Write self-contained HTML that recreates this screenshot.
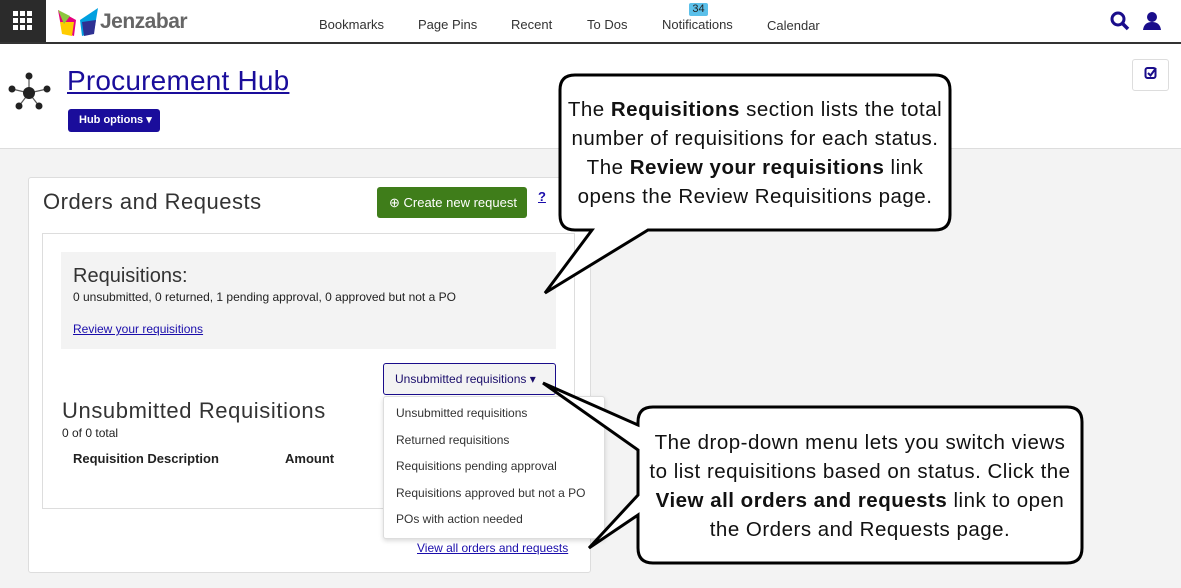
<!DOCTYPE html>
<html><head><style>
*{margin:0;padding:0;box-sizing:border-box}
body{width:1181px;height:588px;overflow:hidden;position:relative;background:#f3f3f3;font-family:"Liberation Sans",sans-serif;color:#222}
.a{position:absolute}
.nav{font-size:13px;color:#333}
u{color:#1a0dab}
.call{font-family:"Liberation Sans",sans-serif;font-size:20.5px;color:#111;text-align:center;line-height:29px;letter-spacing:0.5px;white-space:nowrap}
</style></head><body>
<div class="a" style="left:0;top:0;width:1181px;height:148px;background:#fff"></div>
<div class="a" style="left:0;top:0;width:46px;height:44px;background:#2b2b2b"></div>
<div class="a" style="left:46px;top:0;width:1135px;height:42px;background:#fff;border-top-left-radius:12px"></div>
<div class="a" style="left:0;top:42px;width:1181px;height:2px;background:#333"></div>
<svg class="a" style="left:13px;top:11px" width="20" height="20"><g fill="#fff"><rect x="0" y="0" width="5" height="5"/><rect x="7" y="0" width="5" height="5"/><rect x="14" y="0" width="5" height="5"/><rect x="0" y="7" width="5" height="5"/><rect x="7" y="7" width="5" height="5"/><rect x="14" y="7" width="5" height="5"/><rect x="0" y="14" width="5" height="5"/><rect x="7" y="14" width="5" height="5"/><rect x="14" y="14" width="5" height="5"/></g></svg>
<svg class="a" style="left:56px;top:6px" width="44" height="32"><path d="M2 4 L20 14 L18 30 L6 26Z" fill="#e6007e"/><path d="M4 16 L18 16 L16 30 L6 28Z" fill="#ffcc00"/><path d="M42 2 L24 14 L26 30 L38 26Z" fill="#00a0e0"/><path d="M40 14 L26 16 L28 30 L38 28Z" fill="#2e3192"/><path d="M2 4 L14 10 L8 18Z" fill="#8dc63f"/></svg>
<div class="a" style="left:100px;top:10px;font-size:21px;color:#666;font-weight:bold;letter-spacing:-0.5px">Jenzabar</div>
<div class="a nav" style="left:319px;top:17px">Bookmarks</div>
<div class="a nav" style="left:418px;top:17px">Page Pins</div>
<div class="a nav" style="left:511px;top:17px">Recent</div>
<div class="a nav" style="left:587px;top:17px">To Dos</div>
<div class="a" style="left:689px;top:3px;width:19px;height:13px;background:#5bc0ea;border-radius:2px;font-size:11px;text-align:center;line-height:13px;color:#222">34</div>
<div class="a nav" style="left:662px;top:17px">Notifications</div>
<div class="a nav" style="left:767px;top:18px">Calendar</div>
<svg class="a" style="left:1110px;top:11px" width="20" height="20"><circle cx="8" cy="8" r="6" fill="none" stroke="#1a0d8b" stroke-width="3"/><path d="M12 12 L18 18" stroke="#1a0d8b" stroke-width="3.5"/></svg>
<svg class="a" style="left:1142px;top:11px" width="20" height="20"><circle cx="10" cy="6" r="5" fill="#1a0d8b"/><path d="M1 19 Q2 11 10 11 Q18 11 19 19Z" fill="#1a0d8b"/></svg>
<div class="a" style="left:1132px;top:59px;width:37px;height:32px;border:1px solid #ddd;border-radius:3px;background:#fff"></div>
<svg class="a" style="left:1144px;top:66px" width="14" height="14"><rect x="1.5" y="2" width="10" height="10" rx="2" fill="none" stroke="#1a0d8b" stroke-width="2"/><path d="M4 7 L6.5 9.5 L12 2" fill="none" stroke="#1a0d8b" stroke-width="2"/></svg>
<svg class="a" style="left:8px;top:72px" width="44" height="40"><g stroke="#555" stroke-width="1.2"><line x1="21" y1="21" x2="21" y2="4"/><line x1="21" y1="21" x2="4" y2="17"/><line x1="21" y1="21" x2="39" y2="17"/><line x1="21" y1="21" x2="11" y2="34"/><line x1="21" y1="21" x2="31" y2="34"/></g><g fill="#222"><circle cx="21" cy="21" r="6"/><circle cx="21" cy="4" r="3.5"/><circle cx="4" cy="17" r="3.5"/><circle cx="39" cy="17" r="3.5"/><circle cx="11" cy="34" r="3.5"/><circle cx="31" cy="34" r="3.5"/></g></svg>
<div class="a" style="left:67px;top:65px;font-size:28px;color:#1a0d9b;text-decoration:underline;letter-spacing:0.2px">Procurement Hub</div>
<div class="a" style="left:68px;top:109px;width:92px;height:23px;background:#1a0d9b;border-radius:3px;color:#fff;font-size:11px;font-weight:bold;line-height:23px;padding-left:11px">Hub options ▾</div>
<div class="a" style="left:0;top:148px;width:1181px;height:1px;background:#ddd"></div>

<div class="a" style="left:28px;top:177px;width:563px;height:396px;background:#fff;border:1px solid #ddd;border-radius:3px"></div>
<div class="a" style="left:43px;top:189px;font-size:22px;color:#333;letter-spacing:0.5px">Orders and Requests</div>
<div class="a" style="left:377px;top:187px;width:150px;height:31px;background:#3f7d1a;border-radius:3px;color:#fff;font-size:13px;line-height:31px;padding-left:12px">⊕ Create new request</div>
<div class="a" style="left:538px;top:189px;font-size:13px;color:#1a0dab;font-weight:bold;text-decoration:underline">?</div>
<div class="a" style="left:42px;top:233px;width:533px;height:276px;border:1px solid #ddd"></div>
<div class="a" style="left:61px;top:252px;width:495px;height:97px;background:#f3f3f3"></div>
<div class="a" style="left:73px;top:265px;font-size:20px;color:#333">Requisitions:</div>
<div class="a" style="left:73px;top:290px;font-size:12px">0 unsubmitted, 0 returned, 1 pending approval, 0 approved but not a PO</div>
<div class="a" style="left:73px;top:322px;font-size:12px"><u>Review your requisitions</u></div>
<div class="a" style="left:383px;top:363px;width:173px;height:32px;border:1px solid #1a0d8b;border-radius:3px;background:#f3f3f3;font-size:12px;line-height:30px;padding-left:11px;color:#1a0d6b">Unsubmitted requisitions ▾</div>
<div class="a" style="left:62px;top:398px;font-size:22px;color:#333;letter-spacing:0.6px">Unsubmitted Requisitions</div>
<div class="a" style="left:62px;top:426px;font-size:12px">0 of 0 total</div>
<div class="a" style="left:73px;top:451px;font-size:13px;font-weight:bold">Requisition Description</div>
<div class="a" style="left:285px;top:451px;font-size:13px;font-weight:bold">Amount</div>
<div class="a" style="left:383px;top:396px;width:222px;height:143px;background:#fff;border:1px solid #ddd;border-radius:3px;box-shadow:0 2px 5px rgba(0,0,0,.15);font-size:12px;color:#333;line-height:26.6px;padding:3px 0 0 12px">Unsubmitted requisitions<br>Returned requisitions<br>Requisitions pending approval<br>Requisitions approved but not a PO<br>POs with action needed</div>
<div class="a" style="left:417px;top:541px;font-size:12px"><u>View all orders and requests</u></div>

<svg class="a" style="left:0;top:0" width="1181" height="588">
<path d="M575 75 H935 Q950 75 950 90 V215 Q950 230 935 230 H648 L545 293 L592 230 H575 Q560 230 560 215 V90 Q560 75 575 75Z" fill="#fff" stroke="#000" stroke-width="3" stroke-linejoin="miter"/>
<path d="M653 407 H1067 Q1082 407 1082 422 V548 Q1082 563 1067 563 H653 Q638 563 638 548 V515 L589 548 L638 495 V450 L543 383 L638 425 V422 Q638 407 653 407Z" fill="#fff" stroke="#000" stroke-width="3"/>
</svg>
<div class="a call" style="left:562px;top:95px;width:386px">The <b>Requisitions</b> section lists the total<br>number of requisitions for each status.<br>The <b>Review your requisitions</b> link<br>opens the Review Requisitions page.</div>
<div class="a call" style="left:640px;top:428px;width:440px">The drop-down menu lets you switch views<br>to list requisitions based on status. Click the<br><b>View all orders and requests</b> link to open<br>the Orders and Requests page.</div>
</body></html>
